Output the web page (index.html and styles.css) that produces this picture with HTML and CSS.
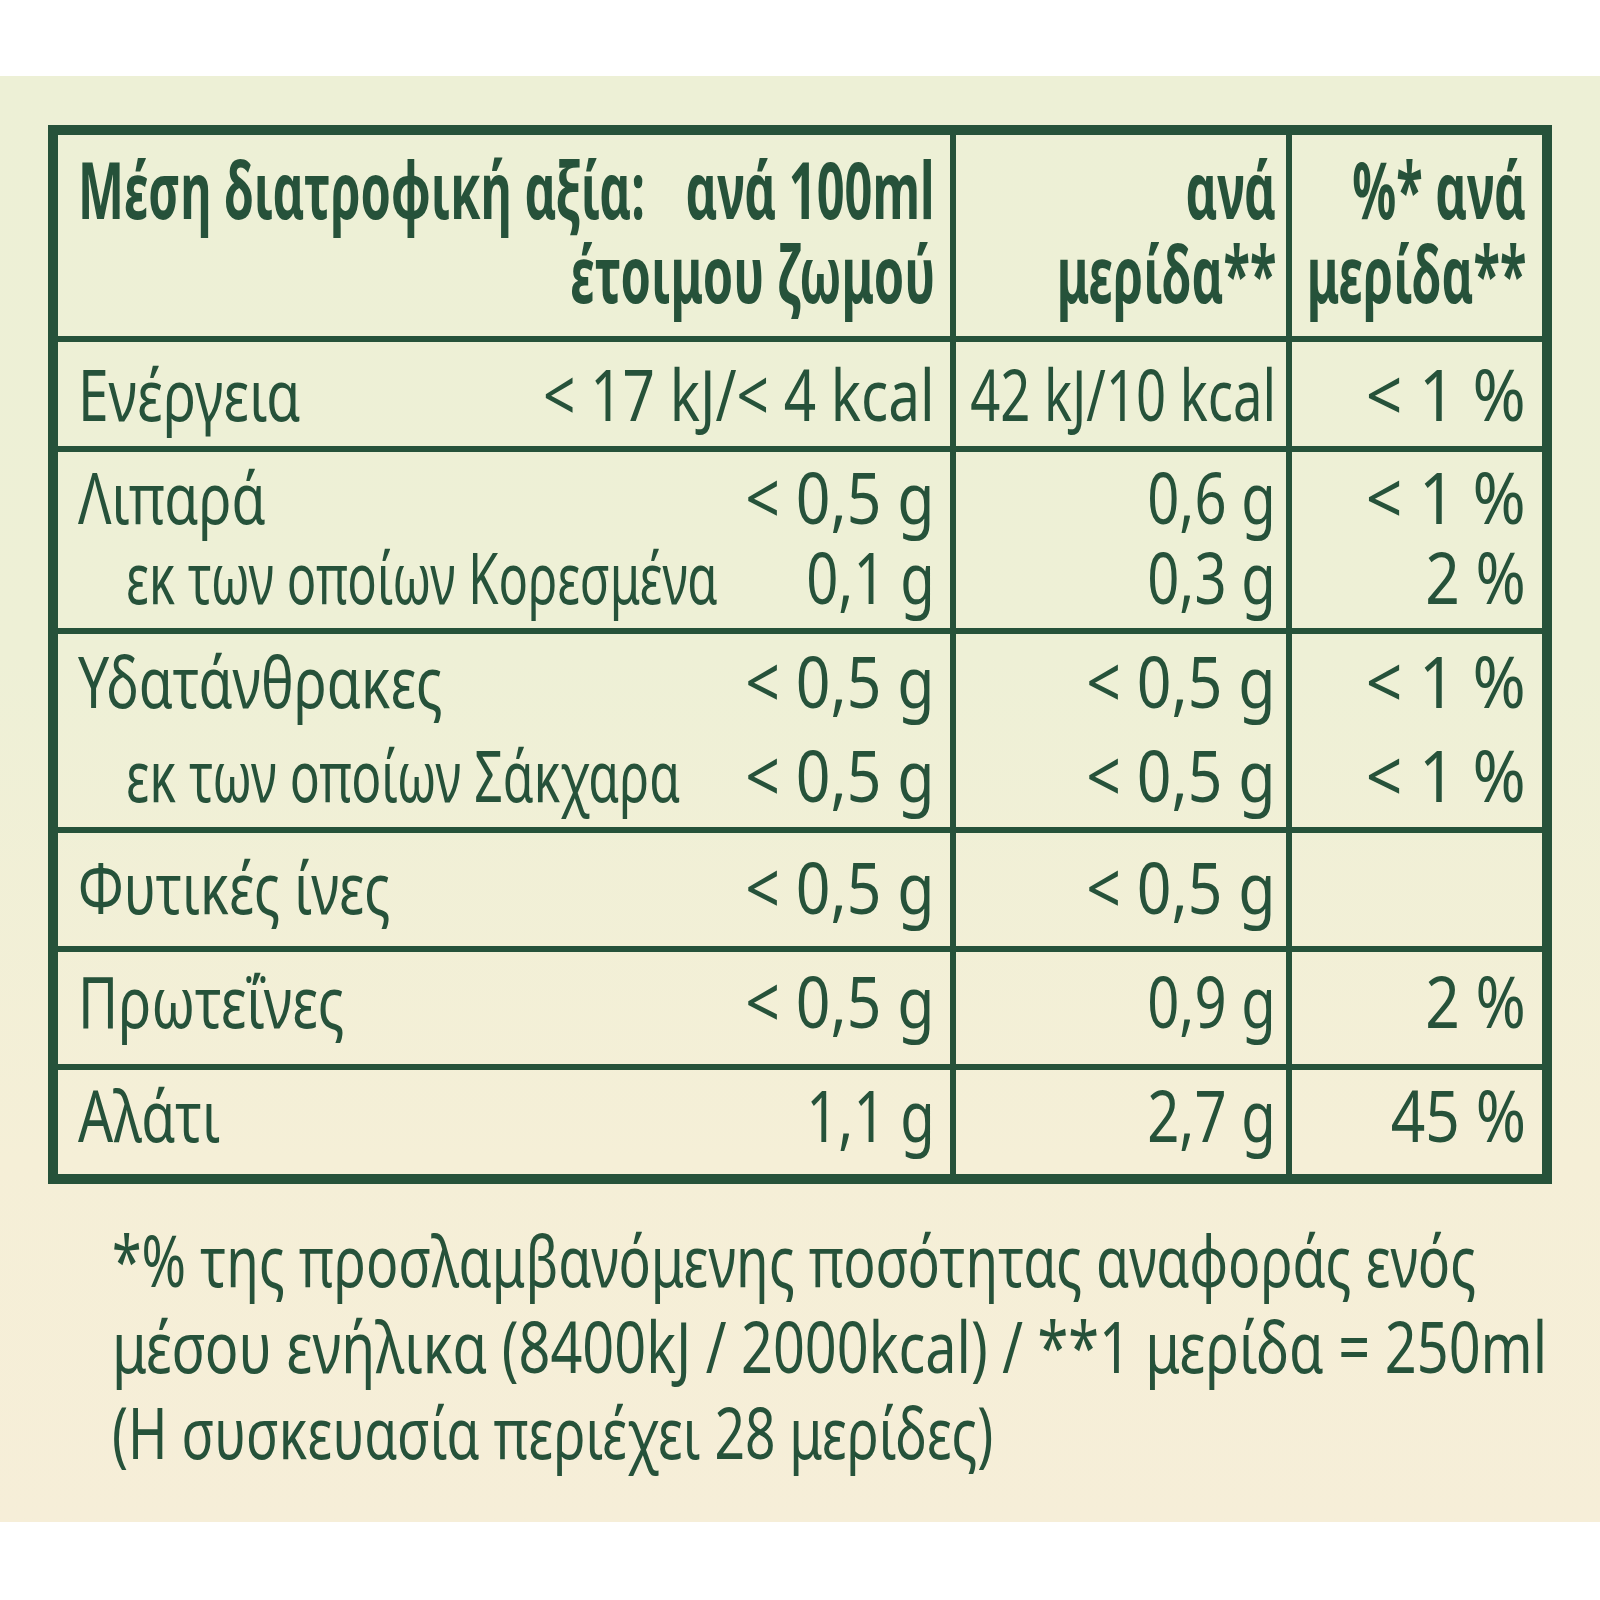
FILE: index.html
```html
<!DOCTYPE html>
<html lang="el">
<head>
<meta charset="utf-8">
<title>Διατροφική αξία</title>
<link rel="stylesheet" href="styles.css">
</head>
<body>
<main class="panel">
  <section class="nutrition">
    <div class="row row-head">
      <div class="cell cell-main">
        <div class="line">
          <span class="lab"><span class="t s-hb">Μέση διατροφική αξία:</span></span>
          <span class="t r s-hb">ανά 100ml</span>
        </div>
        <div class="line line-end">
          <span class="t r s-hb">έτοιμου ζωμού</span>
        </div>
      </div>
      <div class="cell cell-mid">
        <span class="t r s-hb">ανά</span>
        <span class="t r s-hb">μερίδα**</span>
      </div>
      <div class="cell cell-last">
        <span class="t r s-hb">%* ανά</span>
        <span class="t r s-hb">μερίδα**</span>
      </div>
    </div>

    <div class="row row-energy">
      <div class="cell cell-main">
        <div class="line">
          <span class="lab"><span class="t s-lbl">Ενέργεια</span></span>
          <span class="t r s-kj1">&lt; 17 kJ/&lt; 4 kcal</span>
        </div>
      </div>
      <div class="cell cell-mid"><span class="t r s-kj2">42 kJ/10 kcal</span></div>
      <div class="cell cell-last"><span class="t r s-pct1">&lt; 1 %</span></div>
    </div>

    <div class="row row-fat">
      <div class="cell cell-main">
        <div class="line">
          <span class="lab"><span class="t s-lbl">Λιπαρά</span></span>
          <span class="t r s-lt">&lt; 0,5 g</span>
        </div>
        <div class="line">
          <span class="lab sub"><span class="t s-sub1">εκ των οποίων Κορεσμένα</span></span>
          <span class="t r s-num">0,1 g</span>
        </div>
      </div>
      <div class="cell cell-mid">
        <span class="t r s-num">0,6 g</span>
        <span class="t r s-num">0,3 g</span>
      </div>
      <div class="cell cell-last">
        <span class="t r s-pct1">&lt; 1 %</span>
        <span class="t r s-pct">2 %</span>
      </div>
    </div>

    <div class="row row-carb">
      <div class="cell cell-main">
        <div class="line">
          <span class="lab"><span class="t s-lbl">Υδατάνθρακες</span></span>
          <span class="t r s-lt">&lt; 0,5 g</span>
        </div>
        <div class="line">
          <span class="lab sub"><span class="t s-sub2">εκ των οποίων Σάκχαρα</span></span>
          <span class="t r s-lt">&lt; 0,5 g</span>
        </div>
      </div>
      <div class="cell cell-mid">
        <span class="t r s-lt">&lt; 0,5 g</span>
        <span class="t r s-lt">&lt; 0,5 g</span>
      </div>
      <div class="cell cell-last">
        <span class="t r s-pct1">&lt; 1 %</span>
        <span class="t r s-pct1">&lt; 1 %</span>
      </div>
    </div>

    <div class="row row-fibre">
      <div class="cell cell-main">
        <div class="line">
          <span class="lab"><span class="t s-lbl2">Φυτικές ίνες</span></span>
          <span class="t r s-lt">&lt; 0,5 g</span>
        </div>
      </div>
      <div class="cell cell-mid"><span class="t r s-lt">&lt; 0,5 g</span></div>
      <div class="cell cell-last"></div>
    </div>

    <div class="row row-protein">
      <div class="cell cell-main">
        <div class="line">
          <span class="lab"><span class="t s-lbl">Πρωτεΐνες</span></span>
          <span class="t r s-lt">&lt; 0,5 g</span>
        </div>
      </div>
      <div class="cell cell-mid"><span class="t r s-num">0,9 g</span></div>
      <div class="cell cell-last"><span class="t r s-pct">2 %</span></div>
    </div>

    <div class="row row-salt">
      <div class="cell cell-main">
        <div class="line">
          <span class="lab"><span class="t s-lbl">Αλάτι</span></span>
          <span class="t r s-num">1,1 g</span>
        </div>
      </div>
      <div class="cell cell-mid"><span class="t r s-num">2,7 g</span></div>
      <div class="cell cell-last"><span class="t r s-pct">45 %</span></div>
    </div>
  </section>

  <div class="footnote">
    <span class="t s-fn1">*% της προσλαμβανόμενης ποσότητας αναφοράς ενός</span>
    <span class="t s-fn2">μέσου ενήλικα (8400kJ / 2000kcal) / **1 μερίδα = 250ml</span>
    <span class="t s-fn3">(Η συσκευασία περιέχει 28 μερίδες)</span>
  </div>
</main>
</body>
</html>
```

FILE: styles.css
```css
html, body {
  margin: 0;
  padding: 0;
  background: #ffffff;
}

body {
  padding-top: 76px;
  height: 1600px;
  box-sizing: border-box;
  overflow: hidden;
  font-family: "Noto Sans", "Open Sans", "Liberation Sans", sans-serif;
  color: #26523a;
}

.panel {
  height: 1446px;
  box-sizing: border-box;
  padding: 49px 0 0 48px;
  background: linear-gradient(180deg, #edf0d6 0%, #eef0d6 40%, #f5efd7 75%, #f6eed8 100%);
}

/* horizontally condensed text (the reference uses a condensed face) */
.t {
  display: inline-block;
  white-space: nowrap;
  transform: scaleX(var(--sx, 0.77));
  transform-origin: left center;
}

.t.r {
  text-align: right;
  transform-origin: right center;
}

.s-hb   { --sx: 0.625; }
.s-lbl  { --sx: 0.765; }
.s-lbl2 { --sx: 0.752; }
.s-sub1 { --sx: 0.679; }
.s-sub2 { --sx: 0.691; }
.s-lt   { --sx: 0.843; }
.s-num  { --sx: 0.78; }
.s-pct1 { --sx: 0.89; }
.s-pct  { --sx: 0.84; }
.s-kj1  { --sx: 0.787; }
.s-kj2  { --sx: 0.73; }
.s-fn1  { --sx: 0.744; }
.s-fn2  { --sx: 0.775; }
.s-fn3  { --sx: 0.741; }

/* table */
.nutrition {
  width: 1504px;
  box-sizing: border-box;
  border: 10px solid #26523a;
}

.row {
  display: grid;
  grid-template-columns: 898px 336px 250px;
  border-bottom: 6px solid #26523a;
}

.row-salt {
  border-bottom: none;
}

.cell {
  box-sizing: border-box;
  font-size: 72px;
  line-height: 84px;
  display: flex;
  flex-direction: column;
  justify-content: center;
  padding-bottom: 8px;
}

.cell-main {
  padding-left: 20px;
  padding-right: 15px;
  border-right: 6px solid #26523a;
}

.cell-mid {
  padding-left: 14px;
  padding-right: 10px;
  border-right: 6px solid #26523a;
  align-items: flex-end;
}

.cell-last {
  padding-left: 10px;
  padding-right: 16px;
  align-items: flex-end;
}

.line {
  display: flex;
  align-items: center;
}

.line-end {
  justify-content: flex-end;
}

.lab {
  flex: 1 1 0;
  min-width: 0;
  white-space: nowrap;
}

.sub {
  padding-left: 48px;
}

/* header */
.row-head .cell {
  font-weight: 700;
  font-size: 78px;
  line-height: 84px;
  height: 201px;
  padding-bottom: 10px;
}

/* row heights */
.row-energy .cell  { height: 104px; padding-bottom: 2px; }
.row-fat .cell     { height: 176px; line-height: 80px; }
.row-carb .cell    { height: 193px; line-height: 94px; }
.row-fibre .cell   { height: 113px; }
.row-protein .cell { height: 112px; padding-bottom: 16px; }
.row-salt .cell    { height: 104px; padding-bottom: 16px; }

/* footnote */
.footnote {
  margin: 32px 0 0 64px;
  font-size: 72px;
  line-height: 86px;
  display: flex;
  flex-direction: column;
  align-items: flex-start;
}
```
